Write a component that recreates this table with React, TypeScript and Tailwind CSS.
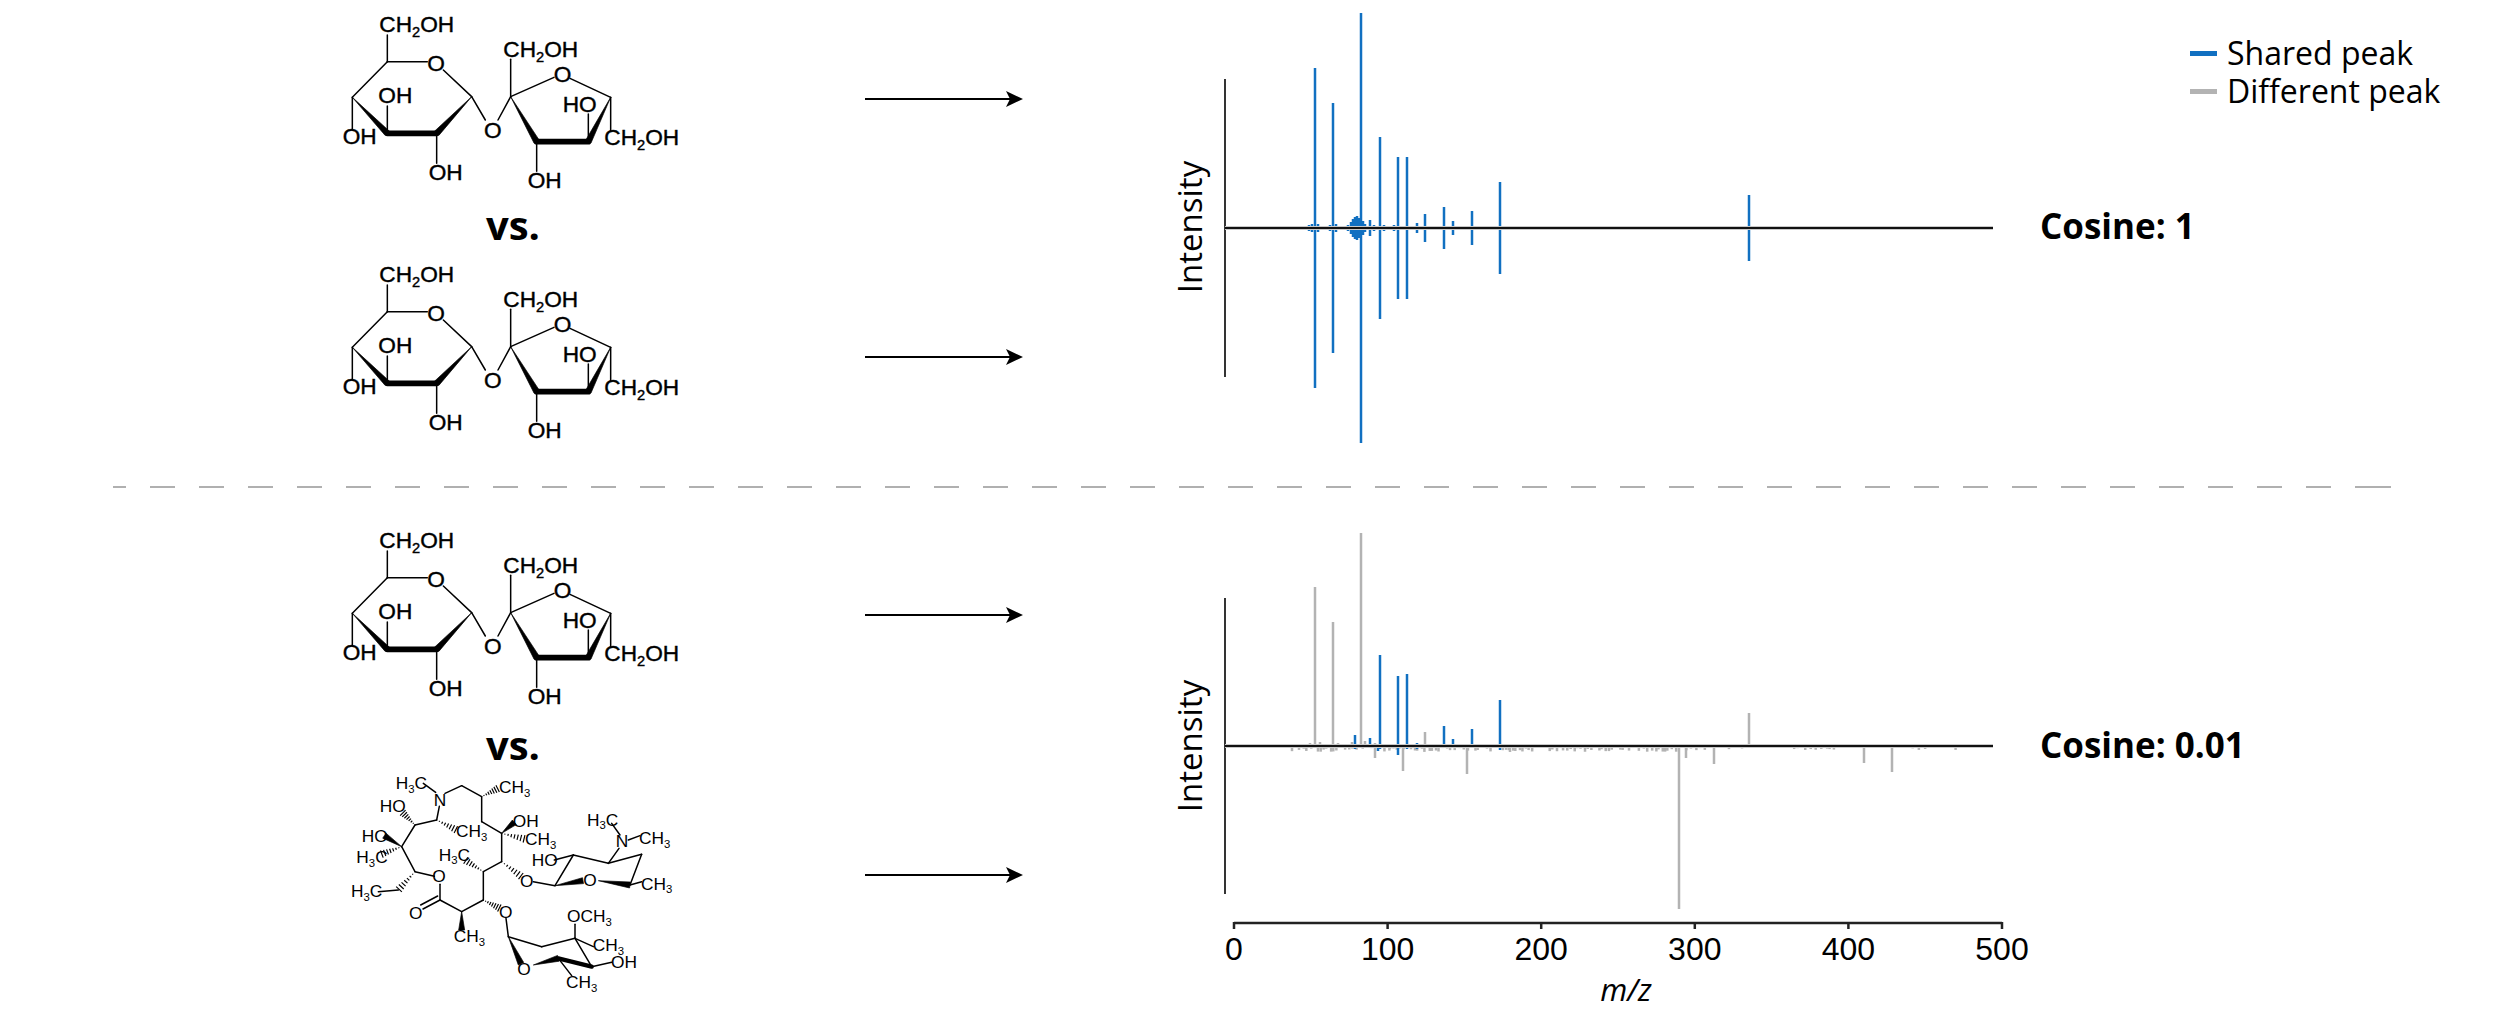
import React from "react";

const BLUE = "#1170c1";
const GRAY = "#b3b3b3";

// polygon for a solid wedge bond, narrow at (x1,y1), wide at (x2,y2)
function wedge(x1: number, y1: number, x2: number, y2: number, w: number) {
  const dx = x2 - x1;
  const dy = y2 - y1;
  const L = Math.hypot(dx, dy);
  const nx = (-dy / L) * w;
  const ny = (dx / L) * w;
  return `${x1},${y1} ${x2 + nx},${y2 + ny} ${x2 - nx},${y2 - ny}`;
}

// hashed wedge bond
function Hash({ x1, y1, x2, y2, w = 12, n = 7 }: { x1: number; y1: number; x2: number; y2: number; w?: number; n?: number }) {
  const dx = x2 - x1;
  const dy = y2 - y1;
  const L = Math.hypot(dx, dy);
  const ux = -dy / L;
  const uy = dx / L;
  const lines = [];
  for (let i = 1; i <= n; i++) {
    const t = i / (n + 0.3);
    const cx = x1 + dx * t;
    const cy = y1 + dy * t;
    const h = w * t;
    lines.push(<line key={i} x1={cx + ux * h} y1={cy + uy * h} x2={cx - ux * h} y2={cy - uy * h} />);
  }
  return <g stroke="#000" strokeWidth={3.5}>{lines}</g>;
}

function Lb({ x, y, pre, sub, post = "", size = 52 }: { x: number; y: number; pre: string; sub?: string; post?: string; size?: number }) {
  if (!sub) {
    return (
      <text x={x} y={y} fontSize={size}>
        {pre}
      </text>
    );
  }
  const s = Math.round(size * 0.65);
  const d = Math.round(size * 0.22);
  return (
    <text x={x} y={y} fontSize={size}>
      {pre}
      <tspan fontSize={s} dy={d}>
        {sub}
      </tspan>
      <tspan fontSize={size} dy={-d}>
        {post}
      </tspan>
    </text>
  );
}

function Sucrose() {
  return (
    <svg width={450} height={200} viewBox="0 0 1350 600" className="block">
      <g stroke="#000" strokeWidth={4.5} fill="none" strokeLinecap="round">
        <line x1={262} y1={105} x2={262} y2={185} />
        <line x1={262} y1={185} x2={382} y2={185} />
        <line x1={430} y1={210} x2={515} y2={290} />
        <line x1={262} y1={185} x2={157} y2={292} />
        <line x1={157} y1={292} x2={157} y2={388} />
        <line x1={262} y1={400} x2={262} y2={318} />
        <line x1={410} y1={400} x2={410} y2={490} />
        <line x1={515} y1={290} x2={556} y2={360} />
        <line x1={594} y1={360} x2={632} y2={290} />
        <line x1={632} y1={290} x2={632} y2={178} />
        <line x1={632} y1={290} x2={762} y2={232} />
        <line x1={810} y1={235} x2={932} y2={292} />
        <line x1={932} y1={292} x2={932} y2={392} />
        <line x1={865} y1={425} x2={865} y2={342} />
        <line x1={710} y1={425} x2={710} y2={514} />
      </g>
      <g fill="#000" stroke="#000" strokeLinejoin="round" strokeWidth={2}>
        <polygon points={wedge(157, 292, 262, 400, 9)} />
        <polygon points={wedge(515, 290, 410, 400, 9)} />
        <polygon points={wedge(932, 292, 865, 425, 9)} />
        <polygon points={wedge(632, 290, 710, 425, 9)} />
      </g>
      <g stroke="#000" strokeWidth={17} strokeLinecap="round">
        <line x1={262} y1={400} x2={410} y2={400} />
        <line x1={710} y1={425} x2={865} y2={425} />
      </g>
      <g fill="#000" stroke="#000" strokeWidth={1.2} fontFamily="'Liberation Sans', Arial, sans-serif">
        <Lb x={238} y={97} pre="CH" sub="2" post="OH" size={68} />
        <Lb x={382} y={212} pre="O" size={68} />
        <Lb x={235} y={310} pre="OH" size={68} />
        <Lb x={128} y={432} pre="OH" size={68} />
        <Lb x={386} y={540} pre="OH" size={68} />
        <Lb x={552} y={413} pre="O" size={68} />
        <Lb x={610} y={170} pre="CH" sub="2" post="OH" size={68} />
        <Lb x={761} y={245} pre="O" size={68} />
        <Lb x={788} y={335} pre="HO" size={68} />
        <Lb x={913} y={435} pre="CH" sub="2" post="OH" size={68} />
        <Lb x={683} y={565} pre="OH" size={68} />
      </g>
    </svg>
  );
}

function Azithromycin() {
  const bonds: [number, number, number, number][] = [
    [235, 55, 272, 82],
    [300, 85, 350, 62],
    [350, 62, 410, 95],
    [410, 95, 410, 170],
    [410, 170, 470, 205],
    [470, 205, 470, 290],
    [470, 290, 415, 320],
    [415, 320, 415, 405],
    [415, 405, 350, 440],
    [350, 440, 285, 405],
    [285, 405, 285, 358],
    [268, 334, 210, 320],
    [160, 375, 100, 380],
    [210, 320, 170, 245],
    [170, 245, 210, 180],
    [210, 180, 275, 165],
    [275, 165, 283, 124],
    [565, 350, 630, 362],
    [630, 362, 685, 270],
    [628, 285, 685, 270],
    [685, 270, 790, 295],
    [790, 295, 822, 250],
    [850, 225, 885, 212],
    [800, 175, 825, 210],
    [790, 295, 890, 268],
    [890, 268, 855, 360],
    [855, 360, 890, 350],
    [483, 460, 490, 515],
    [490, 515, 590, 545],
    [590, 545, 690, 520],
    [690, 520, 690, 478],
    [690, 520, 745, 545],
    [690, 520, 740, 605],
    [740, 605, 800, 592],
    [640, 580, 680, 632],
  ];
  return (
    <svg width={340} height={240} viewBox="0 0 1020 720" className="block">
      <g stroke="#000" strokeWidth={4.5} strokeLinecap="round">
        {bonds.map(([a, b, c, d], i) => (
          <line key={i} x1={a} y1={b} x2={c} y2={d} />
        ))}
        {/* carbonyl double bond */}
        <line x1={285} y1={405} x2={234} y2={432} />
        <line x1={278} y1={393} x2={227} y2={420} />
      </g>
      <Hash x1={410} y1={95} x2={460} y2={70} />
      <Hash x1={470} y1={205} x2={540} y2={222} />
      <Hash x1={470} y1={290} x2={530} y2={335} />
      <Hash x1={415} y1={320} x2={360} y2={285} />
      <Hash x1={415} y1={405} x2={465} y2={430} />
      <Hash x1={210} y1={320} x2={160} y2={375} />
      <Hash x1={170} y1={245} x2={108} y2={268} />
      <Hash x1={210} y1={180} x2={172} y2={142} />
      <Hash x1={275} y1={165} x2={335} y2={195} />
      <g fill="#000" stroke="#000" strokeWidth={2} strokeLinejoin="round">
        <polygon points={wedge(470, 205, 508, 172, 9)} />
        <polygon points={wedge(350, 440, 350, 495, 9)} />
        <polygon points={wedge(170, 245, 118, 212, 9)} />
        <polygon points={wedge(630, 362, 714, 347, 9)} />
        <polygon points={wedge(760, 347, 855, 360, 9)} />
        <polygon points={wedge(565, 600, 640, 580, 9)} />
        <polygon points={wedge(490, 515, 528, 596, 9)} />
      </g>
      <g stroke="#000" strokeWidth={13} strokeLinecap="round">
        <line x1={640} y1={580} x2={740} y2={605} />
      </g>
      <g fill="#000" fontFamily="'Liberation Sans', Arial, sans-serif">
        <Lb x={152} y={72} pre="H" sub="3" post="C" />
        <Lb x={266} y={122} pre="N" />
        <Lb x={462} y={85} pre="CH" sub="3" />
        <Lb x={104} y={142} pre="HO" />
        <Lb x={503} y={187} pre="OH" />
        <Lb x={333} y={217} pre="CH" sub="3" />
        <Lb x={50} y={230} pre="HO" />
        <Lb x={540} y={240} pre="CH" sub="3" />
        <Lb x={34} y={295} pre="H" sub="3" post="C" />
        <Lb x={281} y={287} pre="H" sub="3" post="C" />
        <Lb x={262} y={352} pre="O" />
        <Lb x={18} y={397} pre="H" sub="3" post="C" />
        <Lb x={192} y={462} pre="O" />
        <Lb x={525} y={367} pre="O" />
        <Lb x={560} y={302} pre="HO" />
        <Lb x={726} y={182} pre="H" sub="3" post="C" />
        <Lb x={812} y={247} pre="N" />
        <Lb x={882} y={237} pre="CH" sub="3" />
        <Lb x={715} y={364} pre="O" />
        <Lb x={888} y={374} pre="CH" sub="3" />
        <Lb x={462} y={458} pre="O" />
        <Lb x={326} y={532} pre="CH" sub="3" />
        <Lb x={666} y={472} pre="OCH" sub="3" />
        <Lb x={743} y={559} pre="CH" sub="3" />
        <Lb x={798} y={609} pre="OH" />
        <Lb x={517} y={629} pre="O" />
        <Lb x={663} y={669} pre="CH" sub="3" />
      </g>
    </svg>
  );
}

function Arrow() {
  return (
    <svg width={160} height={20} viewBox="0 0 160 20" className="block">
      <line x1={0} y1={10} x2={148} y2={10} stroke="#000" strokeWidth={2} />
      <polygon points="141,2 158,10 141,18 145,10" fill="#000" />
    </svg>
  );
}

function rng(seed: number) {
  let s = seed;
  return () => {
    s = (s * 16807) % 2147483647;
    return s / 2147483647;
  };
}

type Peak = [number, number, number];

// shared spectrum (x px, up px, down px)
const sharedTop: Peak[] = [
  [1306, 2, 2], [1309, 3, 3], [1312, 4, 4], [1315, 160, 160], [1318, 4, 4], [1321, 2, 2],
  [1330, 3, 3], [1333, 125, 125], [1336, 4, 4], [1340, 2, 2],
  [1348, 3, 3], [1351, 6, 6], [1353, 9, 9], [1355, 11, 11], [1357, 12, 12], [1359, 10, 10],
  [1361, 215, 215], [1363, 7, 7], [1365, 4, 4], [1370, 8, 8], [1374, 3, 3], [1380, 91, 91],
  [1384, 3, 3], [1389, 2, 2], [1394, 3, 3], [1398, 71, 71], [1402, 2, 2], [1407, 71, 71],
  [1412, 2, 2], [1417, 5, 5], [1425, 14, 14], [1433, 2, 2], [1444, 21, 21], [1448, 2, 2],
  [1453, 7, 7], [1464, 2, 2], [1472, 17, 17], [1496, 2, 2], [1500, 46, 46],
  [1592, 2, 2], [1599, 2, 2], [1656, 2, 2], [1690, 2, 2], [1749, 33, 33],
];

const blueBottom: Peak[] = [
  [1355, 11, 3], [1370, 8, 2], [1378, 2, 5], [1380, 91, 3], [1398, 70, 9], [1407, 72, 3],
  [1417, 3, 3], [1425, 1, 2], [1444, 20, 2], [1453, 7, 2], [1472, 17, 2], [1500, 46, 4],
];

const grayBottomMain: Peak[] = [
  [1310, 3, 1], [1315, 159, 1], [1320, 4, 1], [1333, 124, 1], [1338, 3, 1], [1346, 2, 1],
  [1352, 4, 2], [1361, 213, 2], [1365, 5, 1], [1375, 3, 12], [1390, 2, 3], [1403, 1, 25],
  [1425, 14, 2], [1467, 1, 28], [1510, 1, 6], [1679, 2, 163], [1686, 1, 12], [1714, 1, 18],
  [1749, 33, 2], [1864, 1, 17], [1892, 1, 26],
];

function makeNoise(): Peak[] {
  const r = rng(12345);
  const out: Peak[] = [];
  let x = 1292;
  while (x < 1965) {
    const dense = x < 1700;
    if (dense || r() > 0.35) {
      out.push([x, r() < 0.25 ? 2 : 0, 1 + r() * (dense ? 5 : 3)]);
    }
    x += 2 + r() * (dense ? 3 : 6);
  }
  return out;
}
const grayNoise = makeNoise();

function Bars({ data, base, color }: { data: Peak[]; base: number; color: string }) {
  return (
    <g stroke={color} strokeWidth={2.5}>
      {data.map(([x, up, down], i) => (
        <line key={i} x1={x} x2={x} y1={base - up} y2={base + down} />
      ))}
    </g>
  );
}

function Baseline({ y }: { y: number }) {
  return (
    <g>
      <line x1={1225} x2={1993} y1={y} y2={y} stroke="#c8c8c8" strokeWidth={4} />
      <line x1={1225} x2={1993} y1={y} y2={y} stroke="#111" strokeWidth={2} />
    </g>
  );
}

function TopChart() {
  return (
    <svg width={890} height={486} viewBox="1150 0 890 486" className="block shrink-0">
      <line x1={1225} x2={1225} y1={79} y2={377} stroke="#000" strokeWidth={1.6} />
      <Bars data={sharedTop} base={228} color={BLUE} />
      <Baseline y={228} />
      <text
        x={1202}
        y={227}
        transform="rotate(-90 1202 227)"
        textAnchor="middle"
        fontSize={33}
        fontFamily="'Open Sans', sans-serif"
        fill="#000"
      >
        Intensity
      </text>
    </svg>
  );
}

const ticks = [0, 100, 200, 300, 400, 500];

function BottomChart() {
  return (
    <svg width={890} height={537} viewBox="1150 488 890 537" className="block shrink-0">
      <line x1={1225} x2={1225} y1={598} y2={894} stroke="#000" strokeWidth={1.6} />
      <Bars data={grayNoise} base={746} color={GRAY} />
      <Bars data={grayBottomMain} base={746} color={GRAY} />
      <Bars data={blueBottom} base={746} color={BLUE} />
      <Baseline y={746} />
      <text
        x={1202}
        y={746}
        transform="rotate(-90 1202 746)"
        textAnchor="middle"
        fontSize={33}
        fontFamily="'Open Sans', sans-serif"
        fill="#000"
      >
        Intensity
      </text>
      <line x1={1234} x2={2002} y1={923} y2={923} stroke="#222" strokeWidth={2.5} />
      {ticks.map((t, i) => {
        const x = 1234 + i * 153.6;
        return (
          <g key={t}>
            <line x1={x} x2={x} y1={922} y2={929} stroke="#222" strokeWidth={2.5} />
            <text
              x={x}
              y={960}
              textAnchor="middle"
              fontSize={32}
              fontFamily="'Liberation Sans', Arial, sans-serif"
              fill="#000"
            >
              {t}
            </text>
          </g>
        );
      })}
      <text
        x={1626}
        y={1001}
        textAnchor="middle"
        fontSize={31}
        fontStyle="italic"
        fontFamily="'Open Sans', sans-serif"
        fill="#000"
      >
        m/z
      </text>
    </svg>
  );
}

function LegendRow({ color, label }: { color: string; label: string }) {
  return (
    <div className="flex items-center leading-[38px]">
      <span className={`block w-[27px] h-[5px] mr-[10px] ${color}`} />
      <span>{label}</span>
    </div>
  );
}

export default function App() {
  return (
    <div className="w-[2500px] h-[1025px] bg-white overflow-hidden text-black font-['Open_Sans',sans-serif]">
      {/* top comparison: identical spectra */}
      <section className="flex h-[486px]">
        <div className="w-[750px] shrink-0 pl-[300px] flex flex-col">
          <Sucrose />
          <div className="h-[50px] pt-[5px] pr-[24px] text-center text-[40px] font-bold leading-[40px]">vs.</div>
          <Sucrose />
        </div>
        <div className="w-[400px] shrink-0 pl-[115px] pt-[89px] flex flex-col gap-[238px]">
          <Arrow />
          <Arrow />
        </div>
        <TopChart />
        <div className="flex flex-col">
          <div className="ml-[150px] pt-[34px] text-[32px]">
            <LegendRow color="bg-[#1170c1]" label="Shared peak" />
            <LegendRow color="bg-[#b3b3b3]" label="Different peak" />
          </div>
          <div className="mt-[92px] text-[35px] font-bold leading-[48px]">Cosine: 1</div>
        </div>
      </section>

      <div className="ml-[113px] w-[2278px] h-[2px] bg-[repeating-linear-gradient(90deg,#b0b0b0_0_25px,transparent_25px_49px)] bg-[position:-12px_0]" />

      {/* bottom comparison: different spectra */}
      <section className="flex h-[537px]">
        <div className="w-[750px] shrink-0 pl-[300px] pt-[28px] flex flex-col">
          <Sucrose />
          <div className="h-[49px] pt-[9px] pr-[24px] text-center text-[40px] font-bold leading-[40px]">vs.</div>
          <div className="pl-[45px]">
            <Azithromycin />
          </div>
        </div>
        <div className="w-[400px] shrink-0 pl-[115px] pt-[117px] flex flex-col gap-[240px]">
          <Arrow />
          <Arrow />
        </div>
        <BottomChart />
        <div className="pt-[233px] text-[35px] font-bold leading-[48px]">Cosine: 0.01</div>
      </section>
    </div>
  );
}
